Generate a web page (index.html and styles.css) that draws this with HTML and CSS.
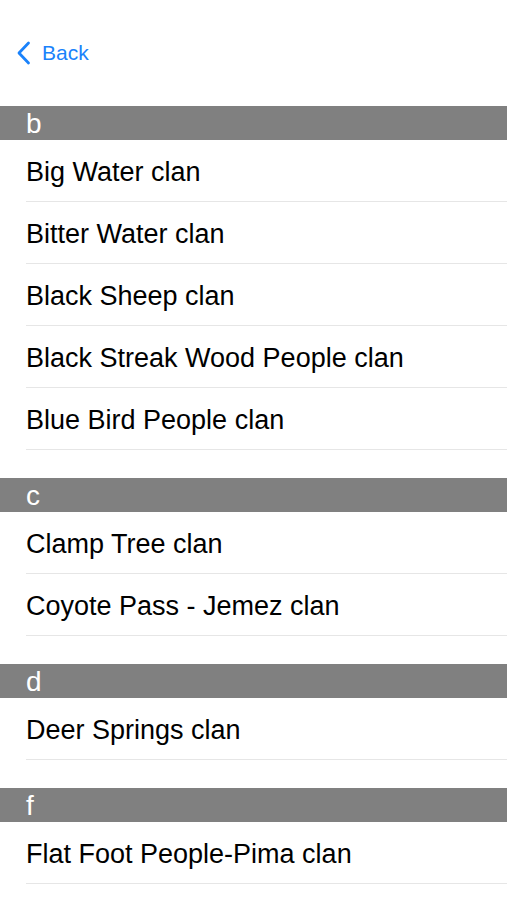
FILE: index.html
```html
<!DOCTYPE html>
<html>
<head>
<meta charset="utf-8">
<link rel="stylesheet" href="styles.css">
</head>
<body>
<div class="nav">
  <a class="back">
    <svg class="chev" width="15" height="24" viewBox="0 0 15 24"><path d="M12.5 2 L3 12 L12.5 22" fill="none" stroke="#1a82fb" stroke-width="2.8" stroke-linecap="round" stroke-linejoin="round"/></svg>
    <span>Back</span>
  </a>
</div>
<div class="list">
  <section class="sec">
    <div class="hdr">b</div>
    <div class="row">Big Water clan</div>
    <div class="row">Bitter Water clan</div>
    <div class="row">Black Sheep clan</div>
    <div class="row">Black Streak Wood People clan</div>
    <div class="row">Blue Bird People clan</div>
  </section>
  <section class="sec">
    <div class="hdr">c</div>
    <div class="row">Clamp Tree clan</div>
    <div class="row">Coyote Pass - Jemez clan</div>
  </section>
  <section class="sec">
    <div class="hdr">d</div>
    <div class="row">Deer Springs clan</div>
  </section>
  <section class="sec">
    <div class="hdr">f</div>
    <div class="row">Flat Foot People-Pima clan</div>
  </section>
</div>
</body>
</html>
```
FILE: styles.css
```css
html, body { margin: 0; padding: 0; background: #fff; }
body { font-family: "Liberation Sans", Arial, sans-serif; width: 507px; height: 900px; overflow: hidden; }
.nav { height: 106px; display: flex; align-items: flex-start; }
.back { display: flex; align-items: center; margin-top: 40px; margin-left: 16px; color: #1a82fb; font-size: 21px; }
.chev { display: block; }
.back span { margin-left: 11px; padding-top: 1px; }
.sec { margin-bottom: 28px; }
.hdr { height: 34px; background: #808080; color: #fff; font-size: 28px; line-height: 34px; padding-left: 26px; padding-top: 1px; box-sizing: border-box; }
.row { height: 62px; margin-left: 26px; padding-top: 3px; border-bottom: 1px solid #e6e6e6; box-sizing: border-box; display: flex; align-items: center; font-size: 27px; color: #000; }
```
